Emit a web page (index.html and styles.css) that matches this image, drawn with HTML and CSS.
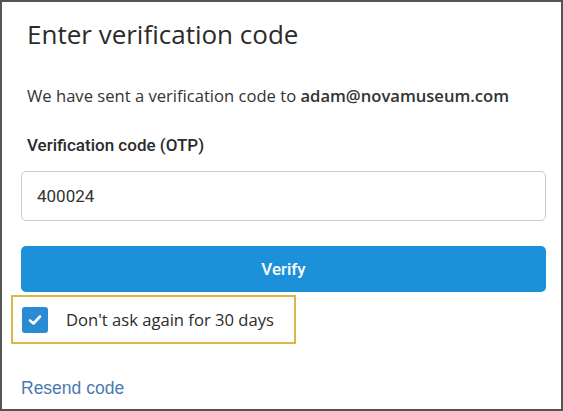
FILE: index.html
```html
<!DOCTYPE html>
<html>
<head>
<meta charset="utf-8">
<link rel="stylesheet" href="styles.css">
</head>
<body>
<div class="frame">
  <h1 class="title">Enter verification code</h1>
  <p class="sent">We have sent a verification code to <b>adam@novamuseum.com</b></p>
  <label class="label" for="otp">Verification code (OTP)</label>
  <input class="input" id="otp" type="text" value="400024">
  <button class="btn">Verify</button>
  <div class="remember">
    <span class="check">
      <svg width="14" height="12" viewBox="0 0 14 12"><path d="M2 6.5 L5.5 9.5 L12 2.5" fill="none" stroke="#fff" stroke-width="2.6" stroke-linecap="round" stroke-linejoin="round"/></svg>
    </span>
    <span class="remember-text">Don't ask again for 30 days</span>
  </div>
  <a class="resend" href="#">Resend code</a>
</div>
</body>
</html>
```

FILE: styles.css
```css
html, body {
  margin: 0;
  padding: 0;
  background: #fff;
}
.frame {
  box-sizing: border-box;
  width: 563px;
  height: 411px;
  border: 2px solid #555;
  padding: 0 16px 0 19px;
  display: flex;
  flex-direction: column;
  overflow: hidden;
}
.title {
  margin: 13px 0 0 6px;
  font-family: "Open Sans", sans-serif;
  font-weight: 400;
  font-size: 26px;
  line-height: 38px;
  color: #2b2b2b;
}
.sent {
  margin: 31px 0 0 6px;
  font-family: "Open Sans", sans-serif;
  font-size: 16.6px;
  line-height: 24px;
  color: #333;
  white-space: nowrap;
}
.sent b {
  font-weight: 600;
}
.label {
  margin: 25px 0 0 6px;
  font-family: Roboto, sans-serif;
  font-weight: 500;
  font-size: 17px;
  line-height: 24px;
  color: #2b2b2b;
}
.input {
  box-sizing: border-box;
  margin-top: 14px;
  width: 525px;
  height: 50px;
  border: 1px solid #ccc;
  border-radius: 5px;
  padding: 0 15px;
  font-family: Roboto, sans-serif;
  font-size: 17px;
  color: #333;
  outline: none;
}
.btn {
  box-sizing: border-box;
  margin-top: 25px;
  width: 525px;
  height: 46px;
  border: 0;
  border-radius: 5px;
  background: #1c90d8;
  color: #fff;
  font-family: Roboto, sans-serif;
  font-weight: 500;
  font-size: 17px;
}
.remember {
  box-sizing: border-box;
  margin: 3px 0 0 -10px;
  width: 285px;
  height: 49px;
  border: 2px solid #dbb843;
  display: flex;
  align-items: center;
  padding-left: 9px;
}
.check {
  flex: none;
  width: 26px;
  height: 26px;
  border-radius: 3px;
  background: #2a8ad4;
  display: flex;
  align-items: center;
  justify-content: center;
}
.remember-text {
  margin-left: 18px;
  font-family: "Open Sans", sans-serif;
  font-size: 16.6px;
  color: #2b2b2b;
  white-space: nowrap;
}
.resend {
  margin-top: 34px;
  font-family: "Liberation Sans", Arial, sans-serif;
  font-size: 17.5px;
  color: #4a7ab2;
  text-decoration: none;
  align-self: flex-start;
}
```
